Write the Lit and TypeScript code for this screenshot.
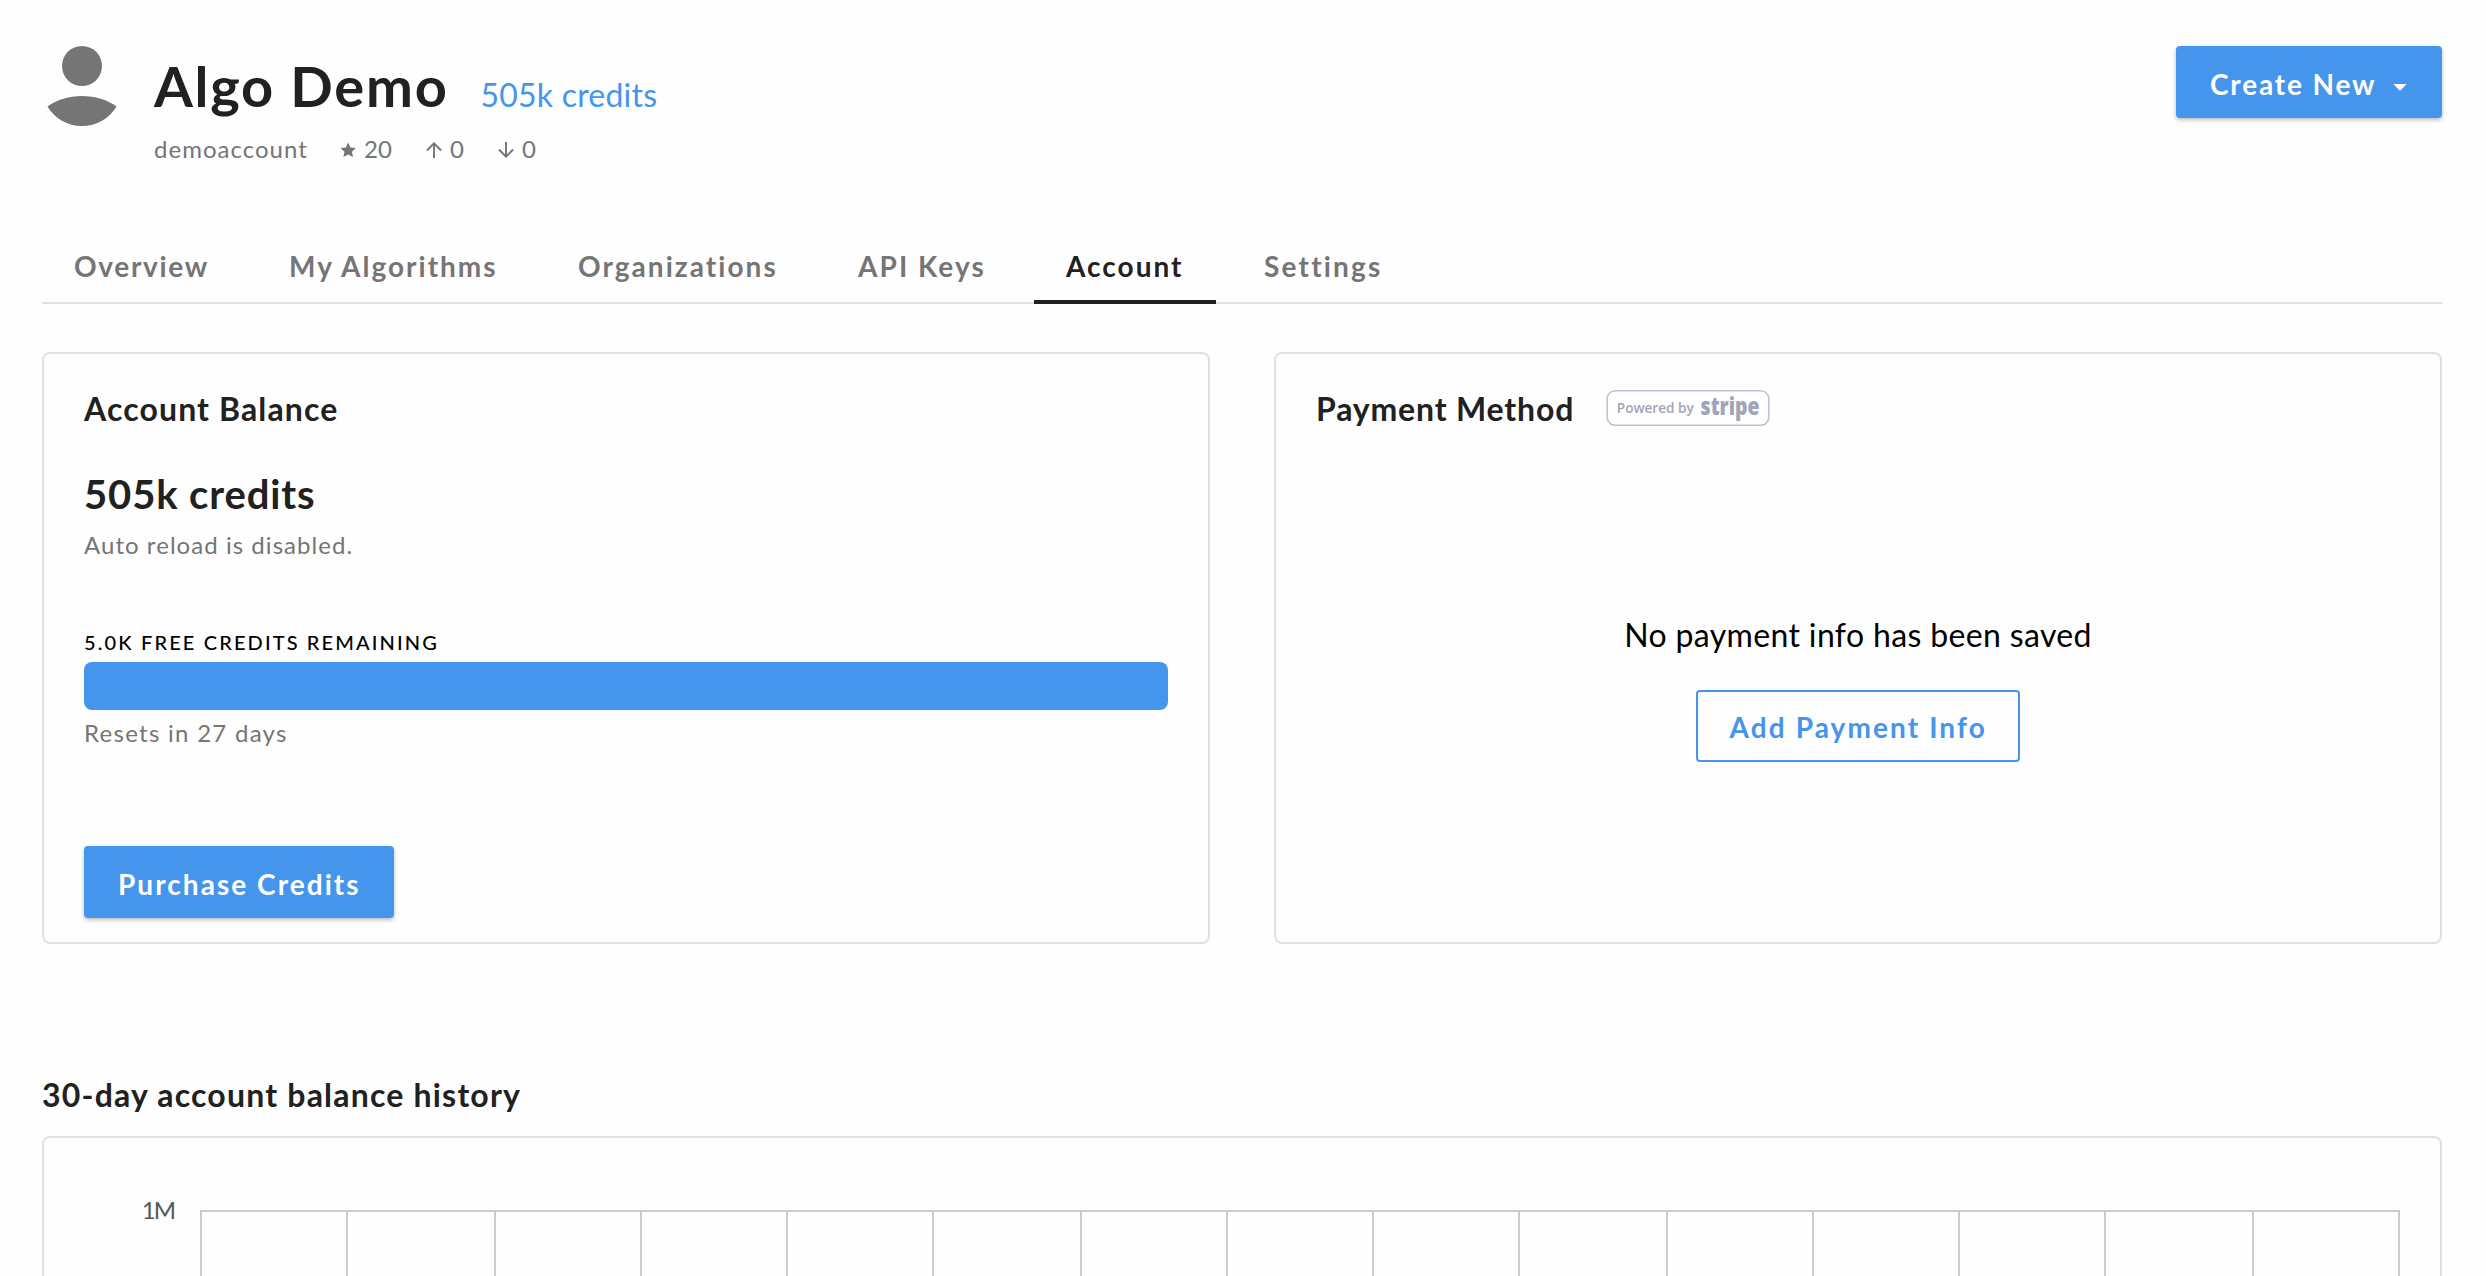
import { LitElement, html, css, svg } from "lit";
import { customElement } from "lit/decorators.js";
import { classMap } from "lit/directives/class-map.js";

interface Tab {
  label: string;
  key: string;
  active?: boolean;
}

const TABS: Tab[] = [
  { label: "Overview", key: "overview" },
  { label: "My Algorithms", key: "algorithms" },
  { label: "Organizations", key: "organizations" },
  { label: "API Keys", key: "keys" },
  { label: "Account", key: "account", active: true },
  { label: "Settings", key: "settings" },
];

// Horizontal positions of the two-day grid lines, from the left edge of the plot.
const GRID_LINES = [0, 146, 294, 440, 586, 732, 880, 1026, 1172, 1318, 1466, 1612, 1758, 1904, 2052, 2198];

@customElement("profile-header")
class ProfileHeader extends LitElement {
  static styles = css`
    :host {
      display: flex;
      height: 187px;
      padding-top: 46px;
      align-items: flex-start;
    }
    .avatar {
      display: block;
      width: 80px;
      height: 80px;
      margin-right: 32px;
      fill: #757575;
    }
    .info {
      flex: 1;
      padding-top: 8px;
    }
    .title {
      display: flex;
      align-items: baseline;
      gap: 32px;
      height: 64px;
      line-height: 64px;
    }
    .name {
      font-size: 56px;
      font-weight: 700;
      letter-spacing: 1.75px;
      color: #212121;
    }
    .credits {
      font-size: 32px;
      letter-spacing: 0.2px;
      color: #4595ec;
    }
    .stats {
      display: grid;
      grid-template-columns: 186px 86px 72px 72px;
      margin-top: 15px;
      font-size: 24px;
      line-height: 32px;
      color: #757575;
    }
    .user {
      letter-spacing: 1.01px;
    }
    .stat {
      display: flex;
      align-items: center;
      gap: 8px;
    }
    .stat svg {
      width: 16px;
      height: 16px;
      margin-top: 2px;
      fill: #757575;
    }
    .stat .arrow {
      fill: none;
      stroke: #757575;
      stroke-width: 1.9;
    }
    .create {
      display: flex;
      box-sizing: border-box;
      width: 266px;
      height: 72px;
      padding: 2px 0 0 34px;
      border-radius: 4px;
      background: #4595ec;
      box-shadow: 0 2px 4px rgba(0, 0, 0, 0.26);
      font-size: 28px;
      font-weight: 700;
      line-height: 72px;
      letter-spacing: 1.84px;
      color: #fff;
    }
    .caret {
      width: 14px;
      height: 7px;
      margin: 36px 0 0 17px;
      fill: #fff;
    }
  `;

  render() {
    return html`
      <svg class="avatar" viewBox="0 0 80 80">
        <circle cx="40" cy="20" r="20"></circle>
        <path d="M5.5 60.5 C15 53.500 27 50 40 50 C53 50 65 53.500 74.500 60.500 C67.500 72.500 54.500 80 40 80 C25.500 80 12.500 72.500 5.500 60.500Z"></path>
      </svg>
      <div class="info">
        <div class="title">
          <span class="name">Algo Demo</span>
          <span class="credits">505k credits</span>
        </div>
        <div class="stats">
          <span class="user">demoaccount</span>
          <span class="stat">
            <svg viewBox="0 0 16 16"><path d="M8.200 .4l2.300 5 5.400.6-4 3.700 1.100 5.400-4.800-2.700-4.800 2.700 1.100-5.400-4-3.700 5.400-.6z"></path></svg>20
          </span>
          <span class="stat">
            <svg class="arrow" viewBox="0 0 16 16"><path d="M8 16V1.500M.9 8.500L8 1.400l7.100 7.100"></path></svg>0
          </span>
          <span class="stat">
            <svg class="arrow" viewBox="0 0 16 16"><path d="M8 0v14.500M.9 7.500L8 14.600l7.100-7.100"></path></svg>0
          </span>
        </div>
      </div>
      <div class="create">
        <span>Create New</span>
        <svg class="caret" viewBox="0 0 14 7"><path d="M.3 0h13.400L7 6.700z"></path></svg>
      </div>
    `;
  }
}

@customElement("profile-tabs")
class ProfileTabs extends LitElement {
  static styles = css`
    :host {
      display: grid;
      grid-template-columns: 215px 289px 280px 208px 198px 182px;
      height: 71px;
      box-shadow: inset 0 -2px #e0e0e0;
      font-size: 28px;
      font-weight: 700;
      line-height: 66px;
      color: #757575;
    }
    .tab {
      box-sizing: border-box;
      width: 182px;
      height: 71px;
      padding-left: 32px;
      white-space: nowrap;
    }
    .active {
      color: #212121;
      box-shadow: inset 0 -4px #212121;
    }
    .overview {
      letter-spacing: 1.67px;
    }
    .algorithms {
      letter-spacing: 2px;
    }
    .organizations {
      letter-spacing: 2.05px;
    }
    .keys {
      letter-spacing: 2.05px;
    }
    .account {
      letter-spacing: 2px;
    }
    .settings {
      letter-spacing: 2.2px;
    }
  `;

  render() {
    return TABS.map(
      (t) => html`<div class=${classMap({ tab: true, active: !!t.active, [t.key]: true })}>${t.label}</div>`
    );
  }
}

@customElement("balance-card")
class BalanceCard extends LitElement {
  static styles = css`
    :host {
      display: flex;
      flex-direction: column;
      align-items: flex-start;
      box-sizing: border-box;
      height: 592px;
      padding: 35px 40px 0;
      border: 2px solid #e0e0e0;
      border-radius: 8px;
      color: #757575;
      font-size: 24px;
      line-height: 32px;
    }
    .title {
      font-size: 32px;
      font-weight: 700;
      line-height: 40px;
      letter-spacing: 1.13px;
      color: #212121;
    }
    .amount {
      margin-top: 41px;
      font-size: 40px;
      font-weight: 700;
      line-height: 48px;
      letter-spacing: 0.88px;
      color: #212121;
    }
    .reload {
      margin-top: 11px;
      letter-spacing: 1.05px;
    }
    .free {
      margin-top: 69px;
      font-size: 20px;
      font-weight: 500;
      line-height: 24px;
      letter-spacing: 2.13px;
      color: #000;
    }
    .bar {
      align-self: stretch;
      height: 48px;
      margin-top: 8px;
      border-radius: 8px;
      background: #4595ec;
    }
    .resets {
      margin-top: 7px;
      letter-spacing: 1.28px;
    }
    .buy {
      box-sizing: border-box;
      width: 310px;
      height: 72px;
      margin-top: 97px;
      padding: 2px 0 0 34px;
      border-radius: 4px;
      background: #4595ec;
      box-shadow: 0 2px 4px rgba(0, 0, 0, 0.26);
      font-size: 28px;
      font-weight: 700;
      line-height: 72px;
      letter-spacing: 2.05px;
      color: #fff;
    }
  `;

  render() {
    return html`
      <div class="title">Account Balance</div>
      <div class="amount">505k credits</div>
      <div class="reload">Auto reload is disabled.</div>
      <div class="free">5.0K FREE CREDITS REMAINING</div>
      <div class="bar"></div>
      <div class="resets">Resets in 27 days</div>
      <div class="buy">Purchase Credits</div>
    `;
  }
}

@customElement("payment-card")
class PaymentCard extends LitElement {
  static styles = css`
    :host {
      display: flex;
      flex-direction: column;
      align-items: center;
      box-sizing: border-box;
      height: 592px;
      padding: 34px 40px 0;
      border: 2px solid #e0e0e0;
      border-radius: 8px;
    }
    .head {
      display: grid;
      grid-template-columns: 290px 164px;
      align-self: stretch;
      align-items: start;
      height: 40px;
    }
    .title {
      font-size: 32px;
      font-weight: 700;
      line-height: 42px;
      letter-spacing: 0.83px;
      color: #212121;
    }
    .badge {
      width: 164px;
      height: 36px;
      margin-top: 2px;
      overflow: visible;
      fill: #a1a4b9;
      font-family: "Open Sans", sans-serif;
    }
    .frame {
      fill: none;
      stroke: #bfbfd1;
      stroke-width: 1.5;
    }
    .powered {
      font-size: 14px;
      font-weight: 600;
    }
    .stripe {
      font-size: 25px;
      font-weight: 800;
    }
    .empty {
      margin-top: 187px;
      font-size: 32px;
      line-height: 40px;
      letter-spacing: 0.36px;
      color: #000;
    }
    .add {
      box-sizing: border-box;
      width: 324px;
      height: 72px;
      margin-top: 35px;
      padding-left: 31.5px;
      border: 2px solid #4595ec;
      border-radius: 4px;
      font-size: 28px;
      font-weight: 700;
      line-height: 71px;
      letter-spacing: 2.1px;
      color: #4595ec;
    }
  `;

  render() {
    return html`
      <div class="head">
        <span class="title">Payment Method</span>
        <svg class="badge" viewBox="0 0 164 36">
          <rect class="frame" x="1.200" y=".75" width="161.600" height="34.500" rx="8"></rect>
          <text class="powered" x="10.800" y="22.600" textLength="77" lengthAdjust="spacingAndGlyphs">Powered by</text>
          <text class="stripe" x="94.600" y="25.300" textLength="59" lengthAdjust="spacingAndGlyphs">stripe</text>
        </svg>
      </div>
      <div class="empty">No payment info has been saved</div>
      <div class="add">Add Payment Info</div>
    `;
  }
}

@customElement("history-chart")
class HistoryChart extends LitElement {
  static styles = css`
    :host {
      display: flex;
      align-items: flex-start;
      box-sizing: border-box;
      height: 560px;
      padding-top: 56px;
      border: 2px solid #e0e0e0;
      border-radius: 8px;
    }
    .label {
      width: 130px;
      margin-right: 26px;
      font-size: 24px;
      line-height: 32px;
      letter-spacing: -2px;
      text-align: right;
      color: #555;
    }
    .plot {
      width: 2200px;
      height: 400px;
      margin-top: 16px;
      fill: #ccc;
    }
  `;

  render() {
    return html`
      <div class="label">1M</div>
      <svg class="plot" viewBox="0 0 2200 400">
        <rect width="2200" height="2"></rect>
        ${GRID_LINES.map((x) => svg`<rect x=${x} width="2" height="400"></rect>`)}
      </svg>
    `;
  }
}

@customElement("app-root")
class AppRoot extends LitElement {
  static styles = css`
    :host {
      display: block;
      box-sizing: border-box;
      width: 2486px;
      height: 1276px;
      padding: 0 44px 0 42px;
      overflow: hidden;
      background: #fefefe;
      font-family: Lato, "Open Sans", sans-serif;
      white-space: nowrap;
    }
    .cards {
      display: grid;
      grid-template-columns: 1fr 1fr;
      gap: 64px;
      margin-top: 48px;
    }
    .heading {
      margin: 131px 0 21px;
      font-size: 32px;
      font-weight: 700;
      line-height: 40px;
      letter-spacing: 1.2px;
      color: #212121;
    }
  `;

  render() {
    return html`
      <profile-header></profile-header>
      <profile-tabs></profile-tabs>
      <div class="cards">
        <balance-card></balance-card>
        <payment-card></payment-card>
      </div>
      <div class="heading">30-day account balance history</div>
      <history-chart></history-chart>
    `;
  }
}
